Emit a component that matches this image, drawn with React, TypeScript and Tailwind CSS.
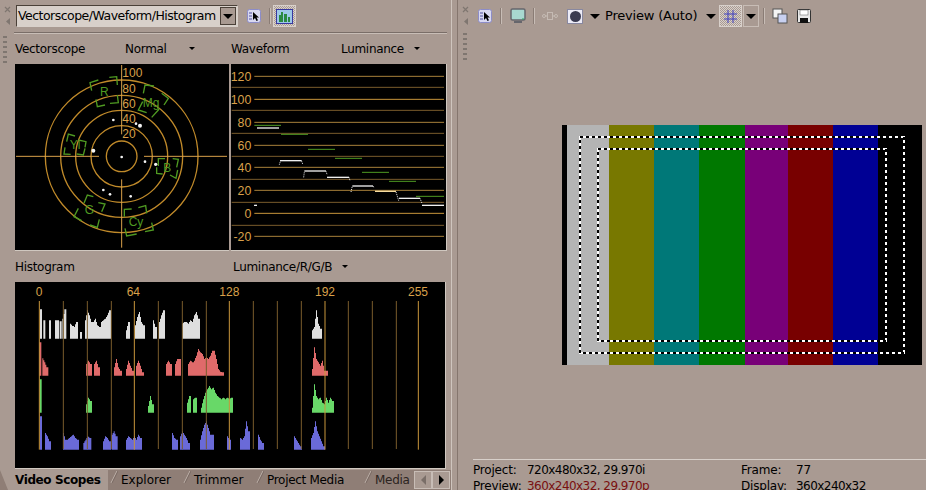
import React from "react";

const ORANGE = "#d9a04a";
const LABEL_FONT = "'Liberation Sans', sans-serif";

const seg = (x: number, hs: number[], base: number, w = 6) => {
  const cols: number[] = [];
  hs.forEach((h, i) => {
    const next = i + 1 < hs.length ? hs[i + 1] : h;
    cols.push(h, Math.round((h + next) / 2));
  });
  const step = w / 2;
  let p = `M${x} ${base}`;
  cols.forEach((h, i) => {
    p += `L${x + i * step} ${base - h}L${x + (i + 1) * step} ${base - h}`;
  });
  return p + `L${x + cols.length * step} ${base}Z`;
};

type S = [number, number[]];
const white: S[] = [[90,[88]],[100,[55]],[117,[55]],[135,[55,55]],[149,[52]],[157,[60,88]],[180,[45,38]],[192,[35,50]],[210,[20]],[225,[55,85,70,50,50,60,40,35]],[273,[50,55,60,70,85]],[348,[25,50]],[375,[40,65,80,50,40]],[429,[55,35]],[447,[50,70,85]],[516,[45,50,50,45,55,50,70,80,60]],[906,[25,35,85,45,30]]];
const red: S[] = [[88,[100]],[97,[52,40,25]],[228,[35,45,35]],[252,[35,45,25]],[312,[25,50,25,15]],[348,[20,45,30,15]],[378,[30,45,30,10]],[468,[35,45,35]],[495,[35,50,50]],[534,[35,45,40]],[552,[45,60,80,70,65,50,55,50,60,75,75,50,20,12,10]],[906,[20,85,50,40,30,45,15,15]]];
const green: S[] = [[89,[100]],[228,[25,45,35]],[414,[20,50,25]],[531,[30,50]],[549,[40,45]],[573,[15,40,60,70,80,70,75,60,50,45,40,45,40,45,40,45]],[906,[15,85,50,40,45,30,25,45,30,45,35]]];
const blue: S[] = [[90,[100]],[105,[50,40,25]],[159,[50,30,30,35,40,45,35,30]],[220,[20,30,40,35]],[279,[25,40,35,25]],[305,[45,55,40]],[348,[30,40,35,30,40,30,45,35]],[486,[50,35,30]],[510,[40,55,45,35,20]],[570,[30,55,75,85,65,45,45]],[651,[40,30]],[690,[35,30,40,85,55]],[744,[45,30,20]],[852,[40,30,20,10]],[903,[35,50,85,55,40,25,10]]];

const targets: { label: string; lx: number; ly: number; lines: string[] }[] = [
  { label: "R", lx: 283, ly: 107, lines: ["265,60 240,68 245,92", "298,52 320,50 322,75", "258,118 262,140 285,135", "300,130 325,128 322,105"] },
  { label: "Mg", lx: 423, ly: 142, lines: ["432,78 405,75 400,100", "455,100 475,115 462,135", "398,125 385,150 410,158", "425,172 445,150 448,145"] },
  { label: "Yl", lx: 195, ly: 267, lines: ["195,228 175,222 170,245", "205,240 228,245 225,262", "165,262 162,282 182,283", "200,282 220,285 225,265"] },
  { label: "B", lx: 472, ly: 335, lines: ["445,318 445,296 465,296", "488,296 505,298 500,322", "440,322 440,340 458,342", "480,345 498,355 503,330"] },
  { label: "G", lx: 238, ly: 463, lines: ["250,410 232,405 222,430", "265,428 285,432 275,455", "205,445 192,470 215,482", "240,495 262,502 268,478"] },
  { label: "Cy", lx: 378, ly: 497, lines: ["343,470 343,448 365,447", "385,443 407,437 410,460", "345,505 350,528 380,522", "405,515 430,510 425,488"] },
];

const dots: [number, number, number][] = [[310,180,4],[378,191,4],[390,197,6],[250,272,6],[335,291,4],[405,305,4],[437,313,5],[280,390,4],[300,403,4],[362,409,4]];

function Grip() {
  return (
    <div className="flex flex-col gap-[3px] w-[4px]">
      {[0, 1, 2, 3, 4, 5].map((i) => (
        <div key={i} className="w-[4px] h-[2px] bg-[#7f7670]" />
      ))}
    </div>
  );
}

function Corner() {
  return (
    <svg width="10" height="22" viewBox="0 0 10 22" className="shrink-0">
      <path d="M2 2l5 5M7 2l-5 5" stroke="#7f7670" strokeWidth="1.200" fill="none" />
      <path d="M7 13v7l-4-3.500z" fill="#7f7670" />
    </svg>
  );
}

function CursorIcon() {
  return (
    <svg width="14" height="14" viewBox="0 0 14 14">
      <rect x="0.500" y="0.500" width="13" height="13" rx="2" fill="#d8d8f0" stroke="#8c8cc8" />
      <path d="M2 4h3M2 7h3M2 10h3" stroke="#5050a0" />
      <path d="M6 3v8l2-2 1.500 3 1.500-.7L9.500 8.500H12z" fill="#000" />
    </svg>
  );
}

function Caret() {
  return <div className="w-0 h-0 border-x-[5px] border-x-transparent border-t-[5px] border-t-black" />;
}

function SmallCaret() {
  return <div className="w-0 h-0 border-x-[3px] border-x-transparent border-t-[3px] border-t-black" />;
}

function Slash() {
  return (
    <svg width="10" height="20" viewBox="0 0 10 20" className="shrink-0">
      <path d="M9 1L3 13" stroke="#c2b6af" fill="none" />
      <path d="M10 1L4 13" stroke="#7a6a63" fill="none" />
    </svg>
  );
}

function Sep() {
  return <div className="w-[2px] h-[16px] bg-[#8a7c75] border-r border-[#c8bdb6] shrink-0" />;
}

function Vectorscope() {
  return (
    <svg viewBox="15 12 642 558" className="box-content w-[214px] h-[186px] bg-black shrink-0 block border-b border-b-[#d0c8c0]">
      {[46, 92, 138, 183, 229].map((r) => (
        <circle key={r} cx="335" cy="289" r={r} fill="none" stroke="#c08a2a" strokeWidth="4" />
      ))}
      <path d="M18 289H267M402 289H651M335 15V223M335 358V563" stroke={ORANGE} strokeWidth="3" fill="none" />
      {([["100", 52], ["80", 100], ["60", 145], ["40", 190], ["20", 235]] as [string, number][]).map(([t, y]) => (
        <text key={t} x="337" y={y} fill={ORANGE} fontSize="36" fontFamily={LABEL_FONT}>{t}</text>
      ))}
      {targets.map((t) => (
        <g key={t.label}>
          {t.lines.map((l) => (
            <polyline key={l} points={l} fill="none" stroke="#4f9a22" strokeWidth="4" />
          ))}
          <text x={t.lx} y={t.ly} textAnchor="middle" fill="#4f9a22" fontSize="36" fontFamily={LABEL_FONT}>{t.label}</text>
        </g>
      ))}
      {dots.map(([x, y, r]) => (
        <circle key={`${x}-${y}`} cx={x} cy={y} r={r} fill="#f4f4f4" />
      ))}
    </svg>
  );
}

function Waveform() {
  const bright: [number, string][] = [[49, "120"], [118, "100"], [187, "80"], [256, "60"], [322, "40"], [391, "20"], [460, "0"], [529, "-20"]];
  const dim = [82, 151, 220, 289, 358, 427, 496];
  const gr: [number, number, number][] = [[88,168,196],[168,249,223],[249,330,268],[330,411,295],[411,492,337],[492,573,364],[573,657,409]];
  const wh: [number, number, number][] = [[96,162,204],[165,230,302],[238,303,333],[306,372,352],[382,444,378],[522,585,415],[591,657,436],[87,96,436]];
  return (
    <svg viewBox="18 12 645 558" className="box-content w-[215px] h-[186px] bg-black shrink-0 block border-r border-b border-[#d0c8c0]">
      {dim.map((y) => <path key={y} d={`M20 ${y}H657`} stroke="#7a5c2c" strokeWidth="3" />)}
      {bright.map(([y, t]) => (
        <g key={t}>
          <path d={`M88 ${y}H657`} stroke={y === 118 || y === 460 ? "#c8963c" : "#a8803a"} strokeWidth="3" />
          <text x="79" y={y + 14} textAnchor="end" fill={ORANGE} fontSize="37" fontFamily={LABEL_FONT}>{t}</text>
        </g>
      ))}
      {gr.map(([a, b, y]) => <path key={a} d={`M${a} ${y}H${b}`} stroke="#4f9a22" strokeWidth="3" />)}
      {wh.map(([a, b, y]) => <path key={a} d={`M${a} ${y}H${b}`} stroke="#f0f0f0" strokeWidth="4" />)}
      <path d="M450 394H513" stroke="#f6dca0" strokeWidth="4" />
      <path d="M163 314L166 304M230 304L233 312M236 352L238 336M303 334L306 343M372 352L375 362M378 396L382 378M444 378L447 384M513 396L521 422M585 415L591 430" stroke="#f0f0f0" strokeWidth="3" strokeDasharray="3 3" />
    </svg>
  );
}

function Histogram() {
  const dimX = [160, 232, 304, 445, 517, 589, 730, 802, 874, 1015, 1087, 1159];
  const brightX = [88, 373, 658, 945, 1225];
  const labels: [number, string][] = [[87, "0"], [370, "64"], [658, "128"], [945, "192"], [1224, "255"]];
  return (
    <svg viewBox="15 81 1290 558" className="box-content w-[430px] h-[186px] bg-black shrink-0 block border-r border-b border-[#d0c8c0]">
      {labels.map(([x, t]) => (
        <text key={t} x={x} y="124" textAnchor="middle" fill={ORANGE} fontSize="36" fontFamily={LABEL_FONT}>{t}</text>
      ))}
      <path d={white.map(([x, h]) => seg(x, h, 251)).join("")} fill="#dedede" />
      <path d={red.map(([x, h]) => seg(x, h, 362)).join("")} fill="#e06a6a" />
      <path d={green.map(([x, h]) => seg(x, h, 473)).join("")} fill="#68d868" />
      <path d={blue.map(([x, h]) => seg(x, h, 584)).join("")} fill="#6a6ad8" />
      {dimX.map((x) => <path key={x} d={`M${x} 138V582`} stroke="#7a5c2c" strokeWidth="3" />)}
      {brightX.map((x) => <path key={x} d={`M${x} 138V584`} stroke="#c8963c" strokeWidth="3" />)}
    </svg>
  );
}

const bars = [
  ["w-[5px]", "bg-black"],
  ["w-[42px]", "bg-[#b4b4b4]"],
  ["w-[45px]", "bg-[#787800]"],
  ["w-[45px]", "bg-[#007878]"],
  ["w-[46px]", "bg-[#007800]"],
  ["w-[43px]", "bg-[#780078]"],
  ["w-[45px]", "bg-[#780000]"],
  ["w-[45px]", "bg-[#000094]"],
  ["w-[44px]", "bg-black"],
];

export default function App() {
  return (
    <div
      className="flex w-[926px] h-[490px] overflow-hidden bg-[#a99a92] text-[12px] text-black"
      style={{ fontFamily: "'DejaVu Sans', sans-serif" }}
    >
      {/* left */}
      <div className="flex flex-col w-[452px] shrink-0 border-r border-r-[#cfc5be]">
        <div className="flex items-center h-[32px] shrink-0 pl-[3px] gap-[3px]">
          <Corner />
          <div className="flex items-center w-[222px] h-[22px] bg-[#d8d0ca] border border-t-[#4a4038] border-l-[#4a4038] border-r-[#d8d0ca] border-b-[#d8d0ca] pl-[1px] text-[12.5px] tracking-[-0.52px] whitespace-nowrap">
            <span className="flex-1">Vectorscope/Waveform/Histogram</span>
            <div className="flex items-center justify-center w-[16px] h-[18px] mr-px bg-[#a99a92] border border-[#4a4038]">
              <Caret />
            </div>
          </div>
          <div className="ml-[6px] mr-[5px]"><CursorIcon /></div>
          <Sep />
          <div className="flex items-center justify-center w-[23px] h-[22px] -ml-px bg-[repeating-conic-gradient(#d8d0ca_0_25%,#a99a92_0_50%)] bg-[length:2px_2px] border border-[#d8d0ca]">
            <svg width="17" height="15" viewBox="0 0 17 15">
              <rect x="0.500" y="0.500" width="16" height="14" fill="#9ec8e8" stroke="#3838a0" />
              <path d="M3 13V6h2V3h2v10zM8 13V5h3v8zM12 13V8h2v5z" fill="#2a8a40" />
            </svg>
          </div>
        </div>
        <div className="h-[2px] ml-[14px] mr-[4px] border-t border-[#7a6e68] bg-[#c8bdb6] shrink-0" />
        <div className="flex flex-1 pt-[1px]">
          <div className="w-[15px] shrink-0 pl-[3px] pt-[1px]"><Grip /></div>
          <div className="flex flex-col w-[431px]">
            <div className="flex items-center h-[29px] pb-[2px] shrink-0 tracking-[-0.3px] whitespace-nowrap">
              <span className="w-[110px]">Vectorscope</span>
              <span className="w-[64px]">Normal</span>
              <SmallCaret />
              <span className="ml-[36px] w-[110px]">Waveform</span>
              <span className="w-[73px]">Luminance</span>
              <SmallCaret />
            </div>
            <div className="flex gap-[2px]">
              <Vectorscope />
              <Waveform />
            </div>
            <div className="flex items-center h-[31px] shrink-0 whitespace-nowrap tracking-[-0.3px]">
              <span className="w-[218px]">Histogram</span>
              <span className="w-[109px]">Luminance/R/G/B</span>
              <SmallCaret />
            </div>
            <Histogram />
          </div>
        </div>
        <div className="flex items-center h-[20px] shrink-0 bg-[#8f7e76] whitespace-nowrap">
          <div className="flex items-center h-full w-[108px] font-bold bg-[#a99a92] tracking-[-0.4px]">
            <svg width="15" height="20" viewBox="0 0 15 20" className="shrink-0">
              <path d="M0 0L8 20H0z" fill="#8f7e76" />
            </svg>
            Video Scopes
          </div>
          <Slash />
          <span className="ml-[3px] w-[60px]">Explorer</span>
          <Slash />
          <span className="ml-[3px] w-[60px]">Trimmer</span>
          <Slash />
          <span className="ml-[3px] w-[95px] tracking-[-0.3px]">Project Media</span>
          <Slash />
          <span className="ml-[3px] w-[36px] overflow-hidden tracking-[-0.3px] text-[#2c2421]">Media</span>
          <div className="flex items-center justify-center w-[18px] h-[18px] ml-[3px] bg-[#a99a92] border border-[#c8bdb6]">
            <div className="w-0 h-0 border-y-[5px] border-y-transparent border-r-[5px] border-r-[#7a6e68]" />
          </div>
          <div className="flex items-center justify-center w-[18px] h-[18px] bg-[#a99a92] border border-[#c8bdb6]">
            <div className="w-0 h-0 border-y-[5px] border-y-transparent border-l-[5px] border-l-black" />
          </div>
        </div>
      </div>

      {/* splitter */}
      <div className="w-[6px] shrink-0 border-r border-r-[#85766e]" />

      {/* right */}
      <div className="flex flex-col flex-1 min-w-0">
        <div className="flex items-center h-[32px] shrink-0 pl-[3px]">
          <Corner />
          <div className="ml-[7px]"><CursorIcon /></div>
          <div className="mx-[8px]"><Sep /></div>
          <svg width="16" height="16" viewBox="0 0 16 16">
            <rect x="1" y="1" width="14" height="11" rx="1.500" fill="#a8d8d0" stroke="#66666c" strokeWidth="1.500" />
            <path d="M4 14h8" stroke="#66666c" strokeWidth="2" />
            <path d="M12 11h2" stroke="#30a060" />
          </svg>
          <div className="mx-[7px]"><Sep /></div>
          <svg width="16" height="10" viewBox="0 0 16 10" className="opacity-60">
            <path d="M3 5h3M10 5h3" stroke="#e0d8d0" />
            <circle cx="2" cy="5" r="1.500" fill="none" stroke="#d8d0ca" />
            <rect x="5.500" y="1.500" width="5" height="7" fill="none" stroke="#d8d0ca" />
            <circle cx="14" cy="5" r="1.500" fill="none" stroke="#d8d0ca" />
          </svg>
          <div className="ml-[9px] flex items-center justify-center w-[16px] h-[15px] bg-[#ecebf6] border border-[#8888a0]">
            <div className="w-[11px] h-[11px] rounded-full bg-[#3a3a50]" />
          </div>
          <div className="ml-[7px]"><Caret /></div>
          <span className="ml-[5px] w-[92px] text-[13px] tracking-[-0.2px] whitespace-nowrap">Preview (Auto)</span>
          <div className="ml-[9px]"><Caret /></div>
          <div className="ml-[3px] flex items-center justify-center w-[23px] h-[22px] bg-[repeating-conic-gradient(#d8d0ca_0_25%,#a99a92_0_50%)] bg-[length:2px_2px] border border-[#d8d0ca]">
            <svg width="13" height="13" viewBox="0 0 13 13">
              <path d="M4 0v13M9 0v13M0 4h13M0 9h13" stroke="#4040c0" />
            </svg>
          </div>
          <div className="ml-px flex items-center justify-center w-[16px] h-[22px] border border-[#c8bdb6]"><Caret /></div>
          <div className="ml-[4px] mr-[7px]"><Sep /></div>
          <svg width="16" height="16" viewBox="0 0 16 16">
            <rect x="1" y="1" width="9" height="9" fill="#f4f4f4" stroke="#555" />
            <rect x="6" y="6" width="9" height="9" fill="#c8d0f0" stroke="#555" />
          </svg>
          <svg width="14" height="14" viewBox="0 0 14 14" className="ml-[9px]">
            <rect x="0.500" y="0.500" width="13" height="13" rx="1" fill="#e8e8e8" stroke="#333" />
            <rect x="3" y="1" width="8" height="5" fill="#fff" stroke="#555" strokeWidth="0.500" />
            <rect x="3" y="9" width="8" height="5" fill="#111" />
          </svg>
        </div>
        <div className="flex-1 min-h-0 flex items-center pb-[1px]">
          <div className="w-[15px] shrink-0 pl-[5px] self-start mt-[1px]"><Grip /></div>
          <div className="relative flex w-[360px] h-[240px] shrink-0 ml-[89px]">
            {bars.map(([w, c]) => (
              <div key={c + w} className={`${w} ${c} h-full`} />
            ))}
            <svg className="absolute inset-0" width="360" height="240" viewBox="0 0 360 240">
              {[[18, 12, 324, 216], [36, 24, 288, 192]].map(([x, y, w, h]) => (
                <g key={x} fill="none" strokeWidth="2">
                  <rect x={x} y={y} width={w} height={h} stroke="#fff" />
                  <rect x={x} y={y} width={w} height={h} stroke="#000" strokeDasharray="3 3" />
                </g>
              ))}
            </svg>
          </div>
        </div>
        <div className="h-[31px] shrink-0 ml-[15px] border-t border-t-[#d8d0ca] pt-[2px] leading-[16px] tracking-[-0.2px] whitespace-nowrap">
          <div className="flex">
            <span className="w-[54px]">Project:</span>
            <span className="w-[214px] tracking-[-0.55px]">720x480x32, 29.970i</span>
            <span className="w-[55px]">Frame:</span>
            <span>77</span>
          </div>
          <div className="flex">
            <span className="w-[54px]">Preview:</span>
            <span className="w-[214px] tracking-[-0.55px] text-[#7a1010]">360x240x32, 29.970p</span>
            <span className="w-[55px]">Display:</span>
            <span className="tracking-[-0.55px]">360x240x32</span>
          </div>
        </div>
      </div>
    </div>
  );
}
